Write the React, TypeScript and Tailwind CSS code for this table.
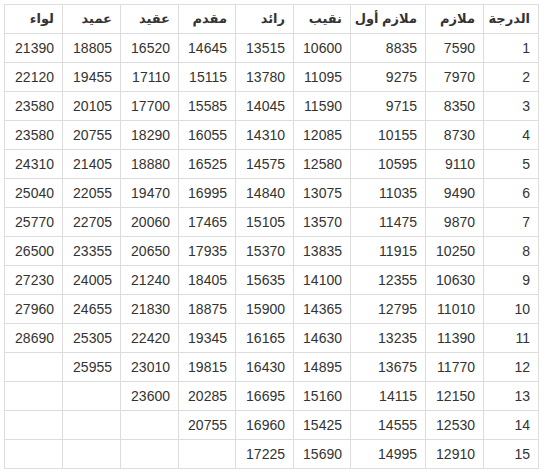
import React from "react";

const headers = ["الدرجة", "ملازم", "ملازم أول", "نقيب", "رائد", "مقدم", "عقيد", "عميد", "لواء"];
const widths = ["w-[55px]", "w-[58px]", "w-[75px]", "w-[57px]", "w-[58px]", "w-[57px]", "w-[58px]", "w-[58px]", "w-[58px]"];

const rows: (string | number)[][] = [
  [1, 7590, 8835, 10600, 13515, 14645, 16520, 18805, 21390],
  [2, 7970, 9275, 11095, 13780, 15115, 17110, 19455, 22120],
  [3, 8350, 9715, 11590, 14045, 15585, 17700, 20105, 23580],
  [4, 8730, 10155, 12085, 14310, 16055, 18290, 20755, 23580],
  [5, 9110, 10595, 12580, 14575, 16525, 18880, 21405, 24310],
  [6, 9490, 11035, 13075, 14840, 16995, 19470, 22055, 25040],
  [7, 9870, 11475, 13570, 15105, 17465, 20060, 22705, 25770],
  [8, 10250, 11915, 13835, 15370, 17935, 20650, 23355, 26500],
  [9, 10630, 12355, 14100, 15635, 18405, 21240, 24005, 27230],
  [10, 11010, 12795, 14365, 15900, 18875, 21830, 24655, 27960],
  [11, 11390, 13235, 14630, 16165, 19345, 22420, 25305, 28690],
  [12, 11770, 13675, 14895, 16430, 19815, 23010, 25955, ""],
  [13, 12150, 14115, 15160, 16695, 20285, 23600, "", ""],
  [14, 12530, 14555, 15425, 16960, 20755, "", "", ""],
  [15, 12910, 14995, 15690, 17225, "", "", "", ""],
];

export default function App() {
  return (
    <div className="bg-white w-[547px] h-[473px] pt-[4px] pl-[4px]" style={{ fontFamily: '"Liberation Sans", Arial, "DejaVu Sans", sans-serif' }}>
      <table dir="rtl" className="w-[534px] table-fixed border-collapse border border-[#dddddd] text-[14px] text-[#333333]">
        <colgroup>
          {widths.map((w, i) => (
            <col key={i} className={w} />
          ))}
        </colgroup>
        <thead>
          <tr className="h-[29px]">
            {headers.map((h, i) => (
              <th key={i} className="border border-[#dddddd] px-[8px] py-0 text-right text-[13px] font-bold leading-[18px] whitespace-nowrap">
                {h}
              </th>
            ))}
          </tr>
        </thead>
        <tbody>
          {rows.map((r, ri) => (
            <tr key={ri} className="h-[29px]">
              {r.map((c, ci) => (
                <td key={ci} className="border border-[#dddddd] px-[8px] py-0 text-right leading-[18px] whitespace-nowrap">
                  {c}
                </td>
              ))}
            </tr>
          ))}
        </tbody>
      </table>
    </div>
  );
}
